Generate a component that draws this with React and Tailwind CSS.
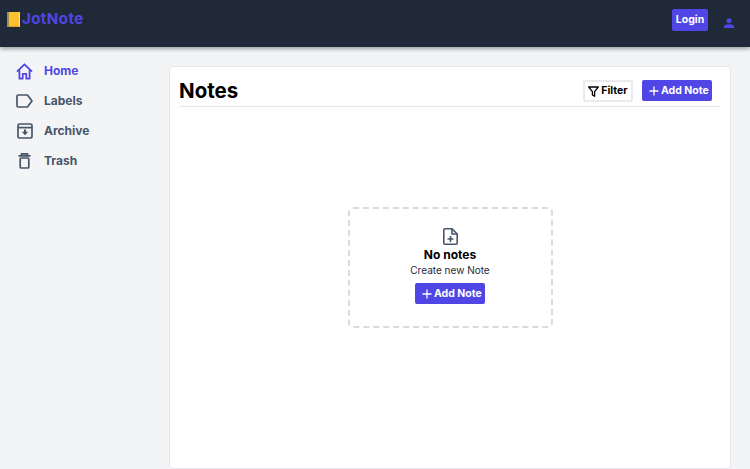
import React from 'react';

const font = { fontFamily: 'Inter, sans-serif' };

const NavItem = ({ active, label, children }) => (
  <div className={`flex items-center h-[30px] pl-[16px] gap-[11px] ${active ? 'text-[#4f46e5]' : 'text-[#475569]'}`}>
    <div className="w-[17px] h-[18px] flex items-center justify-center">{children}</div>
    <span className="text-[12px] font-bold leading-none">{label}</span>
  </div>
);

const Plus = () => (
  <svg width="10" height="10" viewBox="0 0 10 10" fill="none" stroke="currentColor" strokeWidth="1.3">
    <path d="M5 .5v9M.5 5h9" />
  </svg>
);

const AddNote = () => (
  <button className="flex items-center gap-[2px] pl-[7px] w-[70px] h-[21px] bg-[#4f46e5] rounded-[2px] text-white text-[10.5px] font-bold">
    <Plus />
    Add Note
  </button>
);

export default function App() {
  return (
    <div className="h-[469px] w-[750px] overflow-hidden bg-[#f3f4f6] flex flex-col" style={font}>
      <header className="h-[47px] shrink-0 bg-[#1f2937] shadow-[0_2px_4px_rgba(0,0,0,0.35)] flex items-start justify-between relative z-10">
        <div className="flex items-center pl-[7px] pt-[11px]">
          <svg width="13" height="15" viewBox="0 0 13 15">
            <rect x="0" y="0" width="13" height="15" rx="1" fill="#fbc02d" />
            <rect x="0" y="0" width="2" height="15" rx="0.8" fill="#a08a55" />
            <rect x="11.8" y="0" width="1.2" height="15" fill="#f9dc85" />
            <rect x="2" y="13.8" width="9.8" height="1.2" fill="#e3a521" />
          </svg>
          <span className="ml-[2px] text-[#4f46e5] text-[15px] font-bold leading-[16px] tracking-[0.45px]">JotNote</span>
        </div>
        <div className="flex items-center pt-[9px] pr-[16px]">
          <button className="w-[36px] h-[22px] bg-[#4f46e5] rounded-[2px] text-white text-[10.5px] font-bold">Login</button>
          <svg className="ml-[16px] mt-[5px]" width="10" height="10" viewBox="0 0 10 10" fill="#4f46e5">
            <circle cx="5" cy="2.7" r="2.5" />
            <path d="M0 10V8.6C0 6.9 2.2 6.2 5 6.2s5 .7 5 2.4V10z" />
          </svg>
        </div>
      </header>
      <div className="flex flex-1 min-h-0">
        <nav className="w-[169px] shrink-0 pt-[9px]">
          <NavItem active label="Home">
            <svg width="17" height="17" viewBox="0 0 17 17" fill="none" stroke="currentColor" strokeWidth="1.8" strokeLinejoin="round">
              <path d="M1 8.7 8.5 1.3 16 8.7" />
              <path d="M3.4 6.8v8.9h3.3v-4.9h3.6v4.9h3.3V6.8" />
            </svg>
          </NavItem>
          <NavItem label="Labels">
            <svg width="17" height="14" viewBox="0 0 17 14" fill="none" stroke="currentColor" strokeWidth="1.7" strokeLinejoin="round">
              <path d="M2.2 1h9.2L16 7l-4.6 6H2.2A1.3 1.3 0 0 1 1 11.7V2.3A1.3 1.3 0 0 1 2.2 1z" />
            </svg>
          </NavItem>
          <NavItem label="Archive">
            <svg width="16" height="16" viewBox="0 0 16 16" fill="none" stroke="currentColor" strokeWidth="1.7">
              <rect x="1" y="1" width="14" height="14" rx="1.5" />
              <path d="M1 4.6h14" />
              <path d="M8 6.6v3.4" strokeWidth="2" />
              <path d="M4.8 8.8H11.2L8 12.2z" fill="currentColor" stroke="none" />
            </svg>
          </NavItem>
          <NavItem label="Trash">
            <svg width="13" height="16" viewBox="0 0 13 16" fill="none" stroke="currentColor" strokeWidth="1.7">
              <path d="M.5 2.8h12M3.5 2.8V.9h6v1.9" />
              <rect x="2.2" y="5" width="8.6" height="10" rx="1" />
            </svg>
          </NavItem>
        </nav>
        <main className="w-[562px] mt-[19px] bg-white border border-[#e5e7eb] rounded-[4px] px-[9px] flex flex-col">
          <div className="h-[40px] shrink-0 border-b border-[#e5e7eb] flex items-start justify-between pr-[9px]">
            <h1 className="mt-[12px] text-[20.5px] font-bold text-black leading-[24px]">Notes</h1>
            <div className="mt-[13px] flex items-start gap-[9px]">
              <button className="flex items-center justify-center gap-[2px] w-[50px] h-[22px] bg-white border-2 border-[#e8eaed] rounded-[2px] text-black text-[10.5px] font-bold">
                <svg width="11" height="11" viewBox="0 0 11 11" fill="none" stroke="currentColor" strokeWidth="1.3" strokeLinejoin="round">
                  <path d="M.7 1h9.6L6.6 5.6v4.7L4.4 9V5.6z" />
                </svg>
                Filter
              </button>
              <AddNote />
            </div>
          </div>
          <div className="flex-1 flex justify-center pt-[100px]">
            <div className="w-[205px] h-[121px] border-2 border-dashed border-[#d8dbe0] rounded-[5px] flex flex-col items-center pt-[19px]">
              <svg className="text-[#475569]" width="15" height="17" viewBox="0 0 15 17" fill="none" stroke="currentColor" strokeWidth="1.6" strokeLinejoin="round">
                <path d="M9 .8H2A1.3 1.3 0 0 0 .8 2v13A1.3 1.3 0 0 0 2 16.2h11a1.3 1.3 0 0 0 1.2-1.2V6z" />
                <path d="M9 .8V6h5.2" />
                <path d="M7.5 8v6M4.5 11h6" />
              </svg>
              <div className="mt-[1px] text-[12px] font-bold text-black leading-[17px]">No notes</div>
              <div className="text-[10px] text-[#1f2937] leading-[14px]">Create new Note</div>
              <div className="mt-[6px]"><AddNote /></div>
            </div>
          </div>
        </main>
      </div>
    </div>
  );
}
